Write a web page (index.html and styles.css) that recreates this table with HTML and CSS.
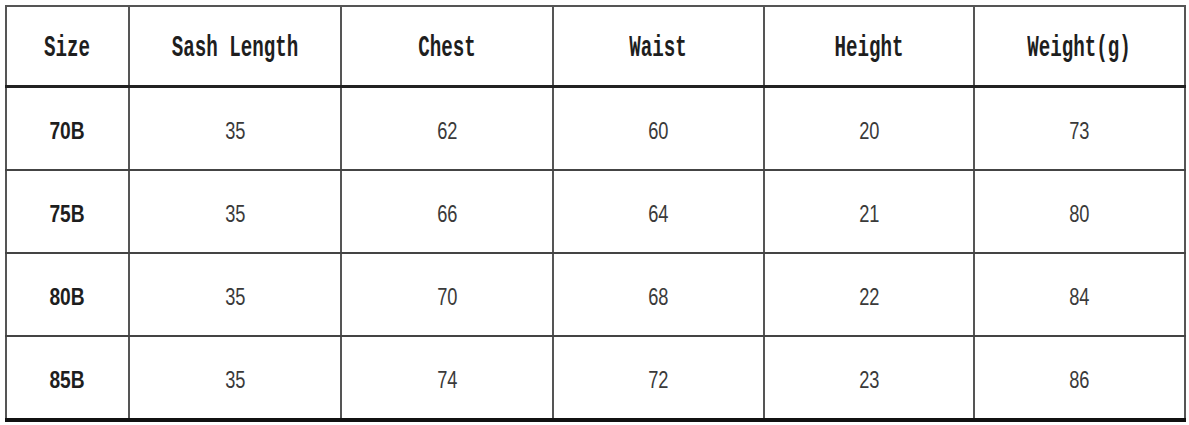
FILE: index.html
```html
<!DOCTYPE html>
<html>
<head>
<meta charset="utf-8">
<link rel="stylesheet" href="styles.css">
</head>
<body>
<table class="size-table">
  <colgroup>
    <col class="c1"><col class="c2"><col class="c3"><col class="c4"><col class="c5"><col class="c6">
  </colgroup>
  <thead>
    <tr>
      <th><span class="hd">Size</span></th>
      <th><span class="hd">Sash Length</span></th>
      <th><span class="hd">Chest</span></th>
      <th><span class="hd">Waist</span></th>
      <th><span class="hd">Height</span></th>
      <th><span class="hd">Weight(g)</span></th>
    </tr>
  </thead>
  <tbody>
    <tr><td class="sz"><span class="num">70B</span></td><td><span class="num">35</span></td><td><span class="num">62</span></td><td><span class="num">60</span></td><td><span class="num">20</span></td><td><span class="num">73</span></td></tr>
    <tr><td class="sz"><span class="num">75B</span></td><td><span class="num">35</span></td><td><span class="num">66</span></td><td><span class="num">64</span></td><td><span class="num">21</span></td><td><span class="num">80</span></td></tr>
    <tr><td class="sz"><span class="num">80B</span></td><td><span class="num">35</span></td><td><span class="num">70</span></td><td><span class="num">68</span></td><td><span class="num">22</span></td><td><span class="num">84</span></td></tr>
    <tr class="last"><td class="sz"><span class="num">85B</span></td><td><span class="num">35</span></td><td><span class="num">74</span></td><td><span class="num">72</span></td><td><span class="num">23</span></td><td><span class="num">86</span></td></tr>
  </tbody>
</table>
</body>
</html>
```
FILE: styles.css
```css
html, body {
  margin: 0;
  padding: 0;
  background: #ffffff;
}
body {
  padding: 5px 0 0 5px;
}
.size-table {
  border-collapse: collapse;
  table-layout: fixed;
  width: 1179px;
  border-top: 2px solid #555;
  border-left: 2px solid #555;
  border-right: 2px solid #444;
  border-bottom: 4px solid #111;
}
.c1 { width: 123px; }
.c2 { width: 212px; }
.c3 { width: 212px; }
.c4 { width: 211px; }
.c5 { width: 210px; }
.c6 { width: 211px; }
.size-table th,
.size-table td {
  border-left: 2px solid #555;
  border-right: 2px solid #555;
  text-align: center;
  vertical-align: middle;
  padding: 0;
  overflow: hidden;
  white-space: nowrap;
}
.size-table th {
  height: 74px;
  border-bottom: 3px solid #222;
  padding-top: 4px;
}
.size-table td {
  height: 76px;
  border-bottom: 2px solid #444;
  padding-top: 5px;
}
.size-table tr.last td {
  border-bottom: 4px solid #111;
}
.hd {
  display: inline-block;
  font-family: "Liberation Mono", "DejaVu Sans Mono", monospace;
  font-weight: bold;
  font-size: 30px;
  color: #1e1e1e;
  transform: scaleX(0.64);
  line-height: 1;
}
.num {
  display: inline-block;
  font-family: "Liberation Sans", Arial, sans-serif;
  font-size: 24px;
  color: #3a3a3a;
  transform: scaleX(0.76);
  line-height: 1;
}
.sz .num {
  font-weight: bold;
  color: #1e1e1e;
  transform: scaleX(0.8);
}
```
